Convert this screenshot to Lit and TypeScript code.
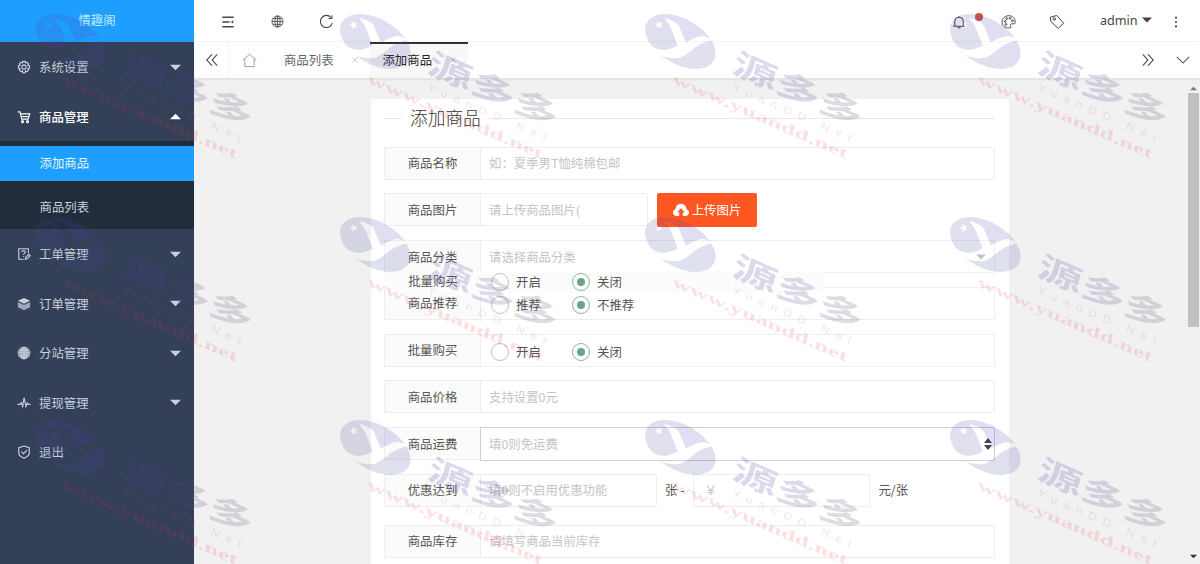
import { LitElement, html, svg, css, TemplateResult } from "lit";
import { customElement } from "lit/decorators.js";

const shapes: Record<string, TemplateResult> = {
  gear: svg`<circle cx="8" cy="8" r="2.4"/><path d="M6.7 1.5h2.6l.4 1.9 1.6-.9 1.9 1.9-.9 1.6 2 .6v2.7l-2 .5.9 1.7-1.9 1.8-1.6-.9-.5 2H6.700l-.5-2-1.600.9-1.900-1.800.9-1.700-2-.5V6.600l2-.6-.9-1.600 1.900-1.900 1.600.9z"/>`,
  cart: svg`<path d="M1 2.200h2.300l2.200 8.300h7.200l1.900-6H4.200"/><path d="M5 7.500h8.500"/><circle cx="6.300" cy="13.300" r="1.100"/><circle cx="12" cy="13.300" r="1.100"/>`,
  ticket: svg`<path d="M7.500 14H2V2h11v5"/><path d="M5.500 5.800c0-2.300 4-2.300 4 0 0 1.500-2 1.400-2 3M7.500 10.500v1M9.500 14l.5-2.200 3.500-3.500 1.700 1.700-3.500 3.500z"/>`,
  layers: svg`<path fill="currentColor" stroke="none" d="M8 1l7 3.300-7 3.300-7-3.300z"/><path fill="currentColor" stroke="none" opacity=".72" d="M1 5.700l7 3.300 7-3.300v6L8 15l-7-3.300z"/>`,
  globeFill: svg`<circle cx="8" cy="8" r="6.800" fill="currentColor" opacity=".65"/><ellipse cx="8" cy="8" rx="3" ry="6.500"/><path d="M1.500 8h13M2.500 4.800h11M2.500 11.200h11M8 1.500v13"/>`,
  pulse: svg`<path d="M.5 9.500h3l1.300-2 1.700 4.500L8 2l2.300 10 1.500-4 1 1.500h2.700"/>`,
  shield: svg`<path d="M8 1.200l6 1.800v6c0 2.700-2.500 4.500-6 6-3.500-1.500-6-3.300-6-6V3z"/><path d="M5 7.600l2.400 2.300 4-4"/>`,
  menu: svg`<path d="M1.500 2.500h13M1.500 13.500h13M1.500 8h7.700M10 8h1"/><path fill="currentColor" stroke="none" d="M14 6v4L11.500 8z"/>`,
  globe: svg`<circle cx="8" cy="8" r="6.800"/><ellipse cx="8" cy="8" rx="3.200" ry="6.800"/><path d="M1.200 8h13.600M2.300 4.500h11.400M2.300 11.500h11.400M8 1.200v13.600"/>`,
  refresh: svg`<path d="M14.200 9.500A6.500 6.500 0 1 1 12.700 3.600"/><path d="M13.800 1.200v3.600h-3.600"/>`,
  bell: svg`<path d="M1.500 12.800h13M3.200 12.500V7.300a4.800 4.800 0 0 1 9.600 0v5.200M6.300 14.600h3.400M8 1v1.500"/>`,
  palette: svg`<path d="M10.500 14.500c-2.600 1-7.500.3-9-3.500C0 6.500 3 2 8 1.800c4.500-.1 7 3 7.200 6.400.1 2.200-1 2.800-2.600 2.300-1.800-.6-3.100.4-2.500 2 .3.900.8 1.400.4 2z"/><circle cx="4.400" cy="8" r="1"/><circle cx="6" cy="4.900" r="1"/><circle cx="9.700" cy="4.600" r="1"/><circle cx="12.300" cy="7.300" r="1"/><circle cx="5.300" cy="11.200" r="1"/>`,
  tag: svg`<path d="M1.300 3.200L7.800 1.500l6.900 7.700-5.500 5.300-7.400-7.200z"/><circle cx="5.300" cy="5" r="1.200"/>`,
  more: svg`<g fill="currentColor" stroke="none"><circle cx="8" cy="3" r="1.200"/><circle cx="8" cy="8" r="1.200"/><circle cx="8" cy="13" r="1.200"/></g>`,
  left: svg`<path d="M8 1.500L2 8l6 6.500M14 1.500L8 8l6 6.500"/>`,
  right: svg`<path d="M2 1.500L8 8l-6 6.500M8 1.500L14 8l-6 6.500"/>`,
  down: svg`<path d="M1 4.500L8 11.500l7-7"/>`,
  home: svg`<path d="M.8 7.800L8 1.300l7.200 6.500M3 6.500v8h10v-8"/>`,
  close: svg`<path d="M3 3l10 10M13 3L3 13"/>`,
  caret: svg`<path fill="currentColor" stroke="none" d="M0 4h16l-8 8z"/>`,
  caretUp: svg`<path fill="currentColor" stroke="none" d="M0 12h16L8 4z"/>`,
  cloud: svg`<path fill="currentColor" stroke="none" fill-rule="evenodd" d="M3.800 14C1.500 14 0 12.500 0 10.500c0-1.700 1-2.900 2.500-3.300C2.800 4 5 1.800 8 1.800s5.200 2.200 5.500 5.400c1.500.4 2.500 1.600 2.500 3.300 0 2-1.500 3.500-3.800 3.500H9.800v-3.600h2L8 6.200l-3.800 4.200h2V14z"/>`,
};

const icon = (name: string, size = 13, width = 1.3) => html`<svg
  width=${size} height=${size} viewBox="0 0 16 16" fill="none"
  stroke="currentColor" stroke-width=${width}>${shapes[name]}</svg>`;

@customElement("app-stamps")
export class AppStamps extends LitElement {
  static styles = css`
    :host { position: absolute; inset: 0; pointer-events: none; overflow: hidden; }
    svg { display: block; }
    .cn { font: 700 36px "Noto Sans CJK SC", sans-serif; }
    .en { font: 12px "Liberation Sans", sans-serif; }
    .url { font: bold 16px "Liberation Serif", serif; }
  `;
  render() {
    const spots = [0, 1, 2].flatMap((r) => [0, 1, 2, 3].map((c) => [35 + c * 305, 14 + r * 203]));
    return html`<svg width="1200" height="564">
      <defs>
        <linearGradient id="g" x1="0" y1="0" x2="0" y2="1">
          <stop offset="0" stop-color="#5a34b4"/><stop offset="1" stop-color="#3c5090"/>
        </linearGradient>
        <linearGradient id="t" x1="0" y1="0" x2="1" y2="0">
          <stop offset="0" stop-color="#4b39b0"/><stop offset="1" stop-color="#50525c"/>
        </linearGradient>
        <mask id="m" maskUnits="userSpaceOnUse" x="-2" y="-2" width="80" height="64">
          <rect x="-2" y="-2" width="80" height="64" fill="#fff"/>
          <path d="M19 4Q29 6 33 10.500Q35 13 36 17L41 28.500Q49 23.500 56.500 22Q62 22 68 26Q58 28 50 33.500Q42 41 35 43.700Q27 45 18 42.500Q10 38 5 30.500Q12 36 20 36Q27 35 32.700 31.500L26.700 16Q24 9 19 4Z" fill="#000"/>
          <path d="M12.500 6.500l1.800 2.700 3-.8-1.600 2.700 1.800 2.300-3-.6-1.900 2.200-.3-2.900-2.700-1.200 2.700-1.300z" fill="#000"/>
        </mask>
      </defs>
      ${spots.map(([x, y]) => svg`<g transform="translate(${x} ${y})">
        <g mask="url(#m)"><ellipse cx="35.300" cy="27.500" rx="38.600" ry="22.600" transform="rotate(30 35.300 27.500)" fill="url(#g)" opacity=".17"/></g>
        <text class="cn" transform="matrix(.92 .4 -.22 .8 86 58)" textLength="140" lengthAdjust="spacingAndGlyphs" fill="url(#t)" opacity=".19">源多多</text>
        <text class="en" transform="matrix(.916 .4 -.3 .85 87 76)" textLength="129" fill="#d8405c" opacity=".15">YuanDD Net</text>
        <text class="url" transform="matrix(.916 .4 -.2 .9 27 69)" textLength="190" lengthAdjust="spacingAndGlyphs" fill="#e83040" opacity=".15">www.yuandd.net</text>
      </g>`)}
    </svg>`;
  }
}

@customElement("app-root")
export class AppRoot extends LitElement {
  static styles = css`
    :host { display: block; position: relative; width: 1200px; height: 564px; overflow: hidden;
      font: 12.4px/16px "Noto Sans CJK SC", sans-serif; color: #555; background: #f1f1f1; }
    * { box-sizing: border-box; }
    svg { display: block; flex: none; }
    .page { display: grid; grid-template-columns: 194px 1fr; height: 564px; }
    .side { background: #344058; color: #c8d0dc; overflow: hidden; }
    .brand { height: 41.500px; background: #1e9fff; display: flex; align-items: center; justify-content: center; color: #bfe6ff; padding-bottom: 2px; }
    .nav { height: 49.500px; display: flex; align-items: center; padding: 2px 13px 0 17px; gap: 8px; }
    .nav span { flex: 1; }
    .nav.open { color: #fff; font-weight: 500; }
    .sub { background: #222d3c; height: 88px; padding-top: 5px; display: grid; grid-template-rows: 35px 35px; row-gap: 9px; }
    .sub div { padding-left: 39.500px; display: flex; align-items: center; }
    .sub .on { background: #1e9fff; color: #e4f5ff; }
    .main { display: grid; grid-template-rows: 42px 37px 1fr; min-width: 0; }
    .top { background: #fff; border-bottom: 1px solid #f4f4f4; display: flex; padding-left: 9.500px; color: #444; }
    .cell { width: 49.200px; display: flex; align-items: center; justify-content: center; position: relative; padding-top: 2px; }
    .push { margin-left: auto; }
    .dot { position: absolute; left: 41px; top: 13px; width: 8px; height: 8px; border-radius: 50%; background: #cf5348; }
    .user { width: 70px; display: flex; align-items: center; gap: 4px; padding-left: 18px; font: 12.600px "Noto Sans", sans-serif; padding-bottom: 1px; }
    .last { width: 48px; }
    .tabs { background: #fff; border-bottom: 1px solid #e4e4e4; box-shadow: 0 1px 2px #0001; display: flex; color: #555; }
    .tabs > div { display: flex; align-items: center; justify-content: center; }
    .roll { width: 35px; padding-left: 1px; }
    .roll.sep { border-right: 1px solid #f5f5f5; }
    .home { width: 42px; color: #999; padding-right: 2px; }
    .tab { width: 98.500px; gap: 17px; padding: 0 0 3px 2px; border-top: 2px solid transparent; color: #666; }
    .tab svg { color: #bbb; }
    .tab.on { background: #f8f8f8; border-color: #333; color: #222; }
    .view { display: grid; grid-template-columns: 1fr 13px; padding-top: 6px; min-height: 0; }
    .card { margin: 14px 0 0 177px; width: 638px; height: 466px; background: #fff; padding: 9px 14px 0 13px; position: relative; border-radius: 2px; }
    .title { display: grid; grid-template-columns: 18px auto 1fr; align-items: center; gap: 8px; font-size: 17.700px; font-weight: 300; height: 21px; color: #333; margin-bottom: 17.500px; }
    .title span { padding-bottom: 3px; }
    .title i { height: 1px; background: #e8e8e8; }
    .row { display: flex; height: 33px; margin-bottom: 13.750px; width: 611px; }
    .label { width: 97px; border: 1px solid #eee; background: #fbfbfb; display: flex; align-items: center; justify-content: center; flex: none; }
    .field { flex: 1; border: 1px solid #eee; border-left: 0; display: flex; align-items: center; padding: 0 8px; color: #c4c4c4; border-radius: 0 2px 2px 0; min-width: 0; }
    .field.pic { flex: none; width: 167px; }
    .field.half { flex: none; width: 176px; }
    .field.yen { border-left: 1px solid #eee; padding-left: 10px; width: 177px; }
    .field.hot { border: 1px solid #cfcfcf; justify-content: space-between; padding: 0 2px 0 8px; height: 34px; margin-left: -1px; }
    .field.pick { justify-content: space-between; padding-right: 8px; }
    .field.opts { padding: 3px 0 0 9.500px; }
    .spin { display: grid; gap: 2px; color: #444; }
    .spin svg { width: 8px; height: 5px; }
    .btn { background: #ff5722; color: #fff; width: 100px; height: 34px; margin-left: 9px; border-radius: 2px; display: flex; align-items: center; justify-content: center; gap: 3px; }
    .mid { display: flex; align-items: center; padding-left: 8px; }
    .mid.gap { padding-right: 9px; }
    .choice { width: 81px; display: flex; align-items: center; gap: 7.500px; color: #555; white-space: nowrap; }
    .radio { width: 18px; height: 18px; border: 1.500px solid #c2c2c2; border-radius: 50%; flex: none; background: #fff; display: grid; place-items: center; }
    .radio.on { border-color: #86b79c; }
    .radio.on::after { content: ""; width: 8px; height: 8px; border-radius: 50%; background: #6aa587; }
    .last-row { margin-top: 18px; }
    .float { position: absolute; left: 14px; top: 172px; width: 439px; height: 22px; background: #fcfcfc; display: flex; align-items: center; }
    .float b { font-weight: 400; width: 96px; text-align: center; padding-bottom: 3px; }
    .float .choice { position: relative; left: 9.500px; }
    .bar { display: flex; flex-direction: column; align-items: center; color: #777; padding-bottom: 5px; }
    .thumb { width: 11px; height: 234px; background: #c1c1c1; margin-top: 1px; }
    .end { margin-top: auto; color: #333; }
  `;

  private nav(name: string, text: string, caret = "caret", open = false) {
    return html`<div class="nav ${open ? "open" : ""}">${icon(name, 14)}<span>${text}</span>${caret ? icon(caret, 11) : ""}</div>`;
  }
  private choice(text: string, on = false) {
    return html`<div class="choice"><div class="radio ${on ? "on" : ""}"></div>${text}</div>`;
  }
  private row(label: string, body: unknown, cls = "") {
    return html`<div class="row ${cls}"><div class="label">${label}</div>${body}</div>`;
  }
  private input(text: string) {
    return html`<div class="field">${text}</div>`;
  }

  render() {
    return html`<div class="page">
      <div class="side">
        <div class="brand">情趣阁</div>
        ${this.nav("gear", "系统设置")}
        ${this.nav("cart", "商品管理", "caretUp", true)}
        <div class="sub"><div class="on">添加商品</div><div>商品列表</div></div>
        ${this.nav("ticket", "工单管理")}
        ${this.nav("layers", "订单管理")}
        ${this.nav("globeFill", "分站管理")}
        ${this.nav("pulse", "提现管理")}
        ${this.nav("shield", "退出", "")}
      </div>
      <div class="main">
        <div class="top">
          <div class="cell">${icon("menu", 14, 1.6)}</div>
          <div class="cell">${icon("globe", 13, 1)}</div>
          <div class="cell">${icon("refresh", 15, 1.1)}</div>
          <div class="cell push">${icon("bell", 14, 1.2)}<div class="dot"></div></div>
          <div class="cell">${icon("palette", 15, 1)}</div>
          <div class="cell">${icon("tag", 16, 1)}</div>
          <div class="user">admin ${icon("caret", 10)}</div>
          <div class="cell last">${icon("more", 14)}</div>
        </div>
        <div class="tabs">
          <div class="roll sep">${icon("left", 14, 1.3)}</div>
          <div class="home">${icon("home", 15, 1)}</div>
          <div class="tab">商品列表${icon("close", 8, 1.5)}</div>
          <div class="tab on">添加商品${icon("close", 8, 1.5)}</div>
          <div class="roll push">${icon("right", 14, 1.3)}</div>
          <div class="roll">${icon("down", 14, 1.3)}</div>
        </div>
        <div class="view">
          <div class="card">
            <div class="title"><i></i><span>添加商品</span><i></i></div>
            ${this.row("商品名称", this.input("如：夏季男T恤纯棉包邮"))}
            ${this.row("商品图片", html`<div class="field pic">请上传商品图片(</div><div class="btn">${icon("cloud", 16)}上传图片</div>`)}
            ${this.row("商品分类", html`<div class="field pick">请选择商品分类${icon("caret", 10)}</div>`)}
            ${this.row("商品推荐", html`<div class="field opts">${this.choice("推荐")}${this.choice("不推荐", true)}</div>`)}
            ${this.row("批量购买", html`<div class="field opts">${this.choice("开启")}${this.choice("关闭", true)}</div>`)}
            ${this.row("商品价格", this.input("支持设置0元"))}
            ${this.row("商品运费", html`<div class="field hot">填0则免运费<div class="spin">
              <svg viewBox="0 0 8 5"><path d="M0 5l4-5 4 5z" fill="currentColor"/></svg>
              <svg viewBox="0 0 8 5"><path d="M0 0l4 5 4-5z" fill="currentColor"/></svg></div></div>`)}
            ${this.row("优惠达到", html`<div class="field half">填0则不启用优惠功能</div>
              <div class="mid gap">张 -</div>
              <div class="field half yen">￥</div><div class="mid">元/张</div>`)}
            ${this.row("商品库存", this.input("请填写商品当前库存"), "last-row")}
            <div class="float"><b>批量购买</b>${this.choice("开启")}${this.choice("关闭", true)}</div>
          </div>
          <div class="bar">${icon("caretUp", 7)}<div class="thumb"></div><div class="end">${icon("caret", 7)}</div></div>
        </div>
      </div>
    </div>
    <app-stamps></app-stamps>`;
  }
}
